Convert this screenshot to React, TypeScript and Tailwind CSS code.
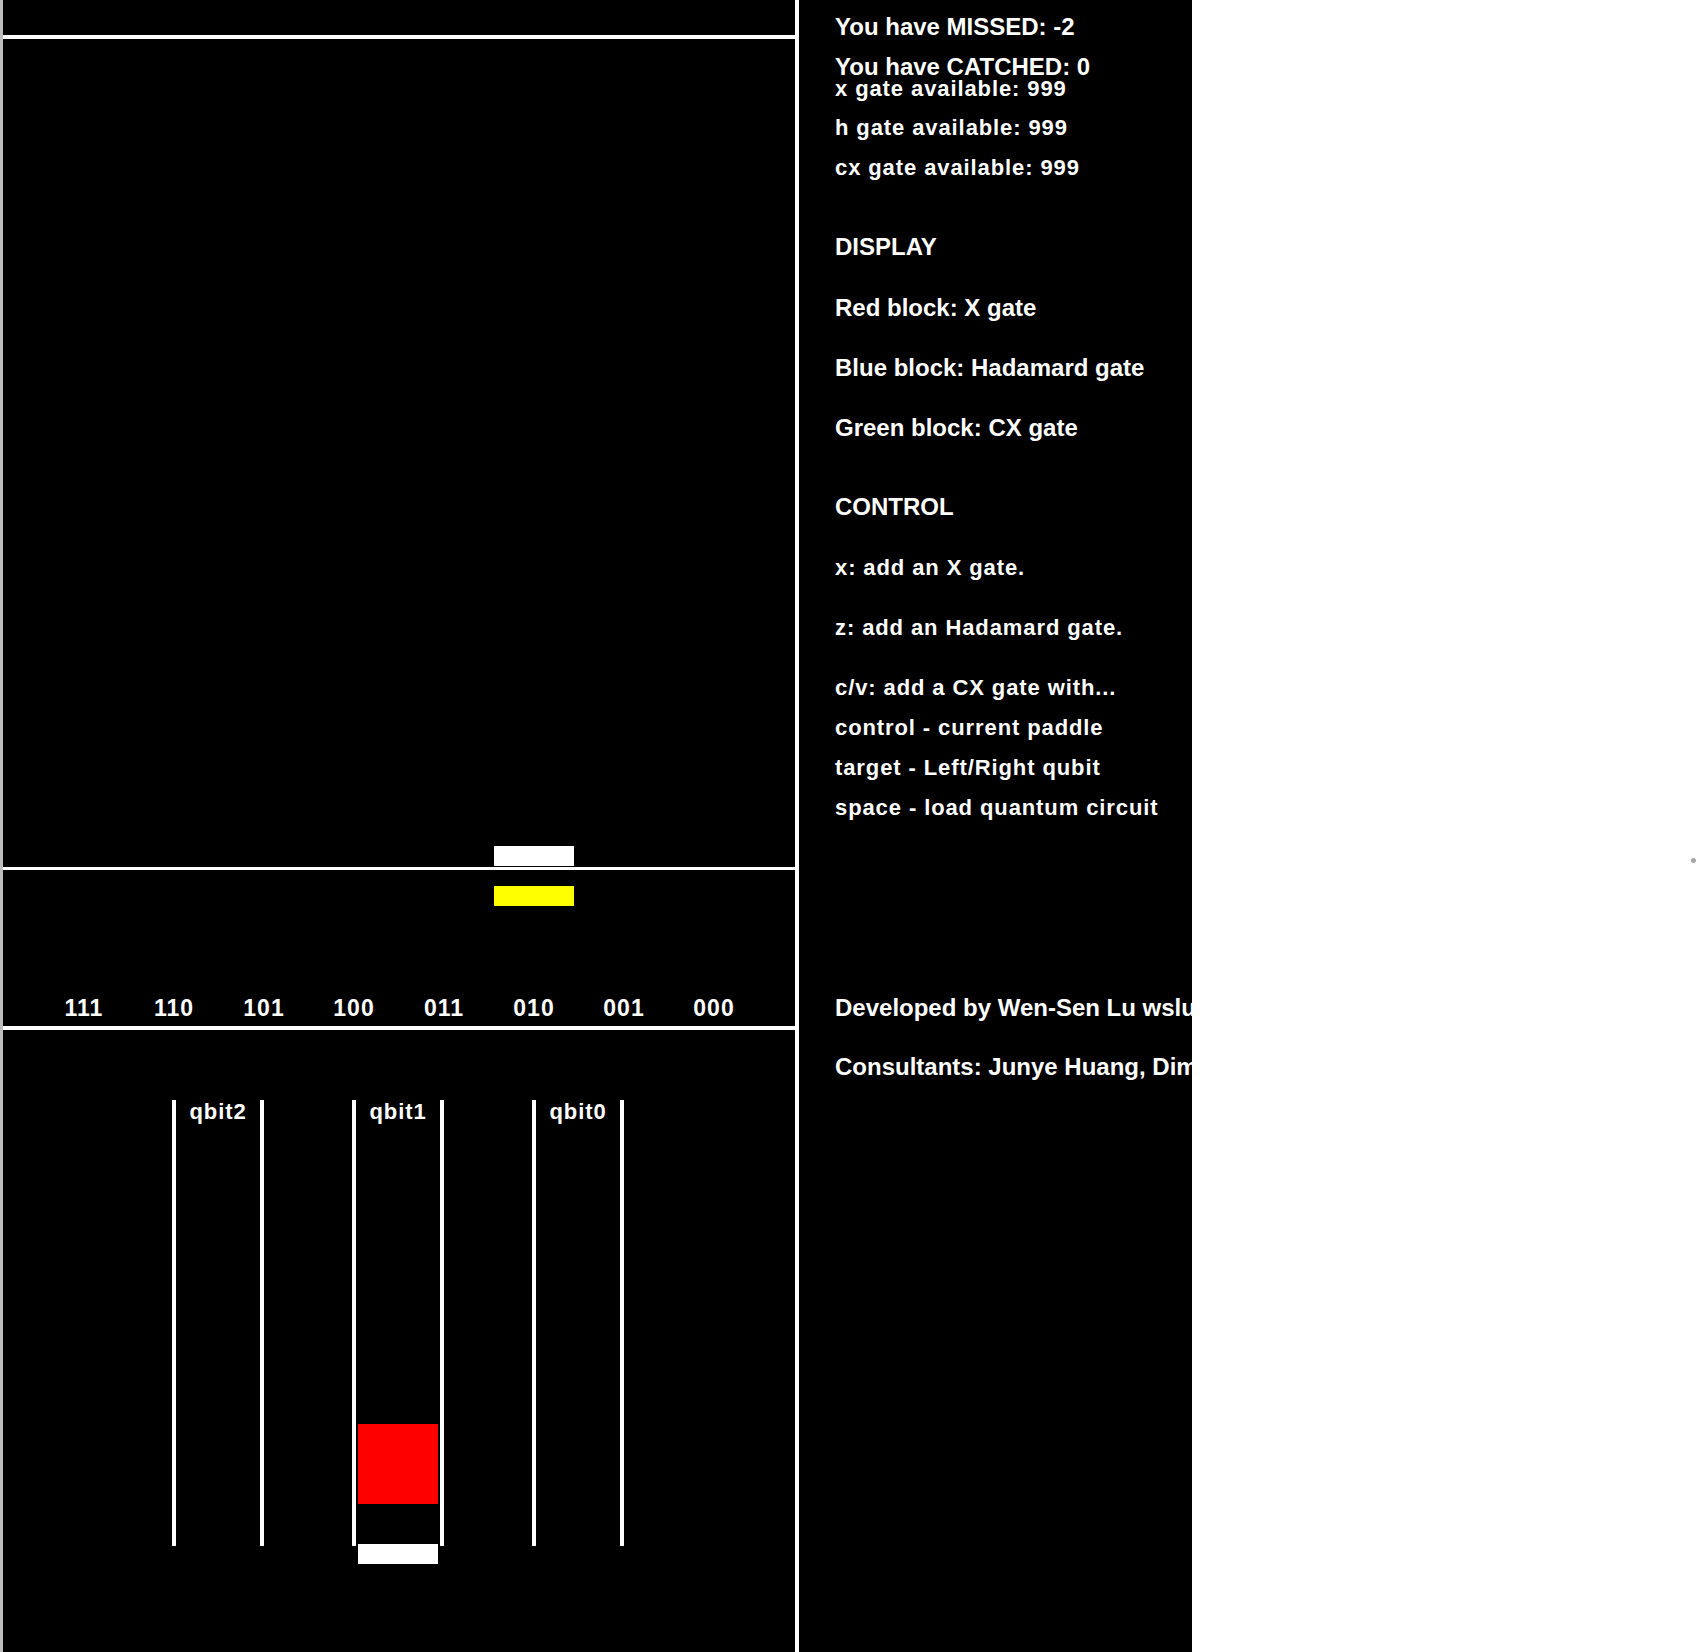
import type { ReactNode } from 'react'

const big = 'text-[24px] leading-[20px] font-bold'
const small = 'text-[22px] leading-[20px] font-bold tracking-[0.9px]'

const states = ['111', '110', '101', '100', '011', '010', '001', '000']

const infoLines = [
  { text: 'You have MISSED: -2', cls: `${big} mt-[17px]` },
  { text: 'You have CATCHED: 0', cls: `${big} mt-[20px]` },
  { text: 'x gate available: 999', cls: `${small} mt-[2px]` },
  { text: 'h gate available: 999', cls: `${small} mt-[19px]` },
  { text: 'cx gate available: 999', cls: `${small} mt-[20px]` },
  { text: 'DISPLAY', cls: `${big} mt-[59px]` },
  { text: 'Red block: X gate', cls: `${big} mt-[41px]` },
  { text: 'Blue block: Hadamard gate', cls: `${big} mt-[40px]` },
  { text: 'Green block: CX gate', cls: `${big} mt-[40px]` },
  { text: 'CONTROL', cls: `${big} mt-[59px]` },
  { text: 'x: add an X gate.', cls: `${small} mt-[41px]` },
  { text: 'z: add an Hadamard gate.', cls: `${small} mt-[40px]` },
  { text: 'c/v: add a CX gate with...', cls: `${small} mt-[40px]` },
  { text: 'control - current paddle', cls: `${small} mt-[20px]` },
  { text: 'target - Left/Right qubit', cls: `${small} mt-[20px]` },
  { text: 'space - load quantum circuit', cls: `${small} mt-[20px]` },
  { text: 'Developed by Wen-Sen Lu wslu', cls: `${big} mt-[180px]` },
  { text: 'Consultants: Junye Huang, Dim', cls: `${big} mt-[39px]` },
]

const Tube = ({ label, children }: { label: string; children?: ReactNode }) => (
  <div className="relative h-[446px] w-[92px] shrink-0 border-x-4 border-white">
    <div className={`${small} pt-[2px] text-center text-white`}>{label}</div>
    {children}
  </div>
)

const GameCanvas = () => (
  <div className="flex w-[792px] shrink-0 flex-col bg-black">
    <div className="h-[35px]" />
    <div className="h-[4px] bg-white" />

    {/* falling area */}
    <div className="relative h-[828px]">
      <div className="absolute left-[491px] top-[807px] h-[20px] w-[80px] bg-white" />
    </div>
    <div className="h-[3px] bg-white" />

    {/* state row */}
    <div className="relative h-[156px] pt-[128px]">
      <div className="absolute left-[491px] top-[16px] h-[20px] w-[80px] bg-[#ffff00]" />
      <div className="ml-[36px] grid w-[720px] grid-cols-8">
        {states.map((s) => (
          <div key={s} className="text-center text-[23px] font-bold leading-[20px] tracking-[1px] text-white">
            {s}
          </div>
        ))}
      </div>
    </div>
    <div className="h-[4px] bg-white" />

    {/* qubits */}
    <div className="flex flex-1 gap-[88px] pl-[169px] pt-[70px]">
      <Tube label="qbit2" />
      <Tube label="qbit1">
        <div className="absolute left-[2px] top-[324px] h-[80px] w-[80px] bg-[#ff0000]" />
        <div className="absolute left-[2px] top-[444px] h-[20px] w-[80px] bg-white" />
      </Tube>
      <Tube label="qbit0" />
    </div>
  </div>
)

const InfoPanel = () => (
  <div className="flex w-[393px] shrink-0 flex-col overflow-hidden whitespace-nowrap bg-black pl-[36px] text-white">
    {infoLines.map((l) => (
      <div key={l.text} className={l.cls}>
        {l.text}
      </div>
    ))}
  </div>
)

export default function App() {
  return (
    <div className="flex h-[1652px] w-full overflow-hidden bg-white font-['Liberation_Sans',Arial,sans-serif]">
      <div className="w-[3px] shrink-0 bg-[#bdbdbd]" />
      <GameCanvas />
      <div className="w-[4px] shrink-0 bg-white" />
      <InfoPanel />
      <div className="relative flex-1 bg-white">
        <div className="absolute left-[499px] top-[858px] h-[5px] w-[5px] rounded-full bg-[#a6a6a6]" />
      </div>
    </div>
  )
}
